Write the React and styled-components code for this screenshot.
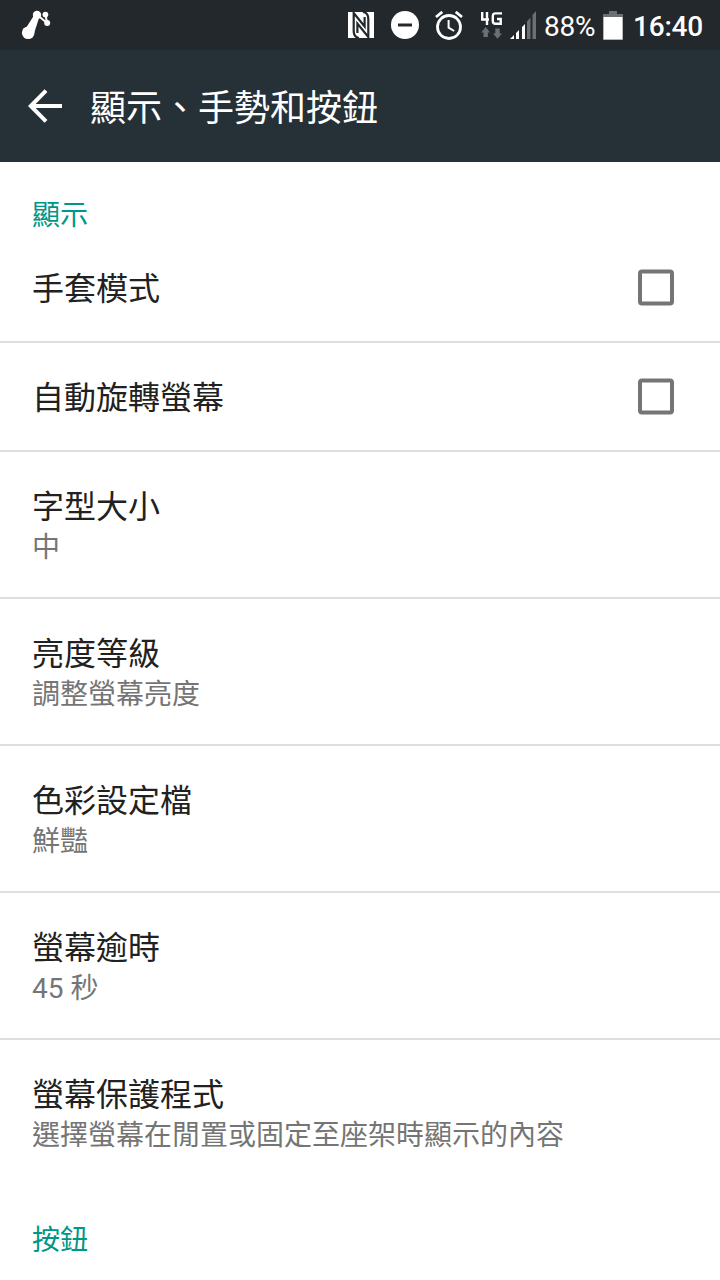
import React from 'react';
import styled, { createGlobalStyle } from 'styled-components';

const GlobalStyle = createGlobalStyle`
  * { box-sizing: border-box; }
  body {
    margin: 0;
    background: #fff;
    font-family: Roboto, "Noto Sans CJK TC", sans-serif;
    overflow: hidden;
  }
  svg { display: block; flex: none; }
`;

const Screen = styled.div`
  width: 720px;
  height: 1280px;
  overflow: hidden;
  background: #fff;
  display: flex;
  flex-direction: column;
`;

const StatusBar = styled.header`
  flex: none;
  height: 50px;
  padding: 0 16px 0 20px;
  display: flex;
  align-items: center;
  justify-content: space-between;
  background: #22282b;
  color: #fff;
`;

const StatusIcons = styled.div`
  display: flex;
  align-items: center;
`;

const Slot = styled.span`
  flex: none;
  display: flex;
  width: ${(p) => p.$width}px;
  margin-right: ${(p) => p.$gap || 0}px;
`;

const StatusText = styled.span`
  flex: none;
  width: ${(p) => p.$width}px;
  margin-right: ${(p) => p.$gap || 0}px;
  padding-top: 3px;
  font-size: 28px;
  line-height: 34px;
  letter-spacing: -0.2px;
  font-weight: ${(p) => p.$weight || 400};
  white-space: nowrap;
`;

const AppBar = styled.div`
  flex: none;
  height: 112px;
  padding-left: 28px;
  display: flex;
  align-items: center;
  background: #263137;
  color: #fff;
`;

const Title = styled.h1`
  margin: 0 0 0 28px;
  padding-top: 6px;
  font-size: 36px;
  line-height: 48px;
  font-weight: 400;
`;

const SectionTitle = styled.h2`
  flex: none;
  margin: 0;
  height: 72px;
  padding: 35px 32px 0;
  font-size: 28px;
  line-height: 38px;
  font-weight: 400;
  color: #009688;
`;

const Row = styled.div`
  flex: none;
  height: ${(p) => (p.$tall ? 147 : 109)}px;
  padding: 0 46px 0 32px;
  display: flex;
  align-items: center;
  justify-content: space-between;
  border-bottom: 2px solid ${(p) => (p.$last ? 'transparent' : '#dedede')};
`;

const Labels = styled.div`
  display: flex;
  flex-direction: column;
`;

const Label = styled.span`
  padding-top: 4px;
  font-size: 32px;
  line-height: 43px;
  color: #212121;
`;

const Summary = styled.span`
  font-size: 28px;
  line-height: 38px;
  color: #757575;
`;

const NodesIcon = () => (
  <svg width="32" height="32" viewBox="20 9 32 32" fill="#fff">
    <path d="M26 28 34.5 14.5 39.5 16.5 33.5 35Z" />
    <path d="M38 15.5 47 23M45.5 14.5 47 23" stroke="#fff" strokeWidth="2" />
    <circle cx="28.2" cy="32.8" r="6.3" />
    <circle cx="37" cy="15" r="4.2" />
    <circle cx="45.4" cy="14.6" r="2.9" />
    <circle cx="47.2" cy="23" r="3" />
  </svg>
);

const NfcIcon = () => (
  <svg width="26" height="26" viewBox="0 0 26 26">
    <path fill="#fff" d="M0 0H26V26H0Z" />
    <path
      fill="none"
      stroke="#22282b"
      strokeWidth="2.2"
      d="M11 26C7.500 25.500 5.700 23 5.700 19V1L16.600 14.500V5M15 0C18.500 .5 20.300 3 20.300 7V25L9.400 11.500V21"
    />
  </svg>
);

const DoNotDisturbIcon = () => (
  <svg width="28" height="28" viewBox="0 0 28 28">
    <circle cx="14" cy="14" r="14" fill="#fff" />
    <path d="M7 12.5H21V15.5H7Z" fill="#22282b" />
  </svg>
);

const AlarmIcon = () => (
  <svg width="28" height="29" viewBox="0 0 28 29" fill="none" stroke="#fff">
    <circle cx="14" cy="16" r="11.5" strokeWidth="2.8" />
    <path d="M1 6 7.3 .9M27 6 20.7 .9" strokeWidth="2.8" />
    <path d="M13.6 9V16.7L19.2 20" strokeWidth="2" />
  </svg>
);

const NetworkIcon = () => (
  <svg width="22" height="28" viewBox="0 -1 22 28" fill="none">
    <path d="M1.2 0V7.500H8M6 0V13" stroke="#fff" strokeWidth="2.4" />
    <path d="M21 1.400H14.500Q11.800 1.400 11.800 4V9Q11.800 11.800 14.500 11.800H19.700V7H16" stroke="#fff" strokeWidth="2.4" />
    <path d="M4.700 15 9 20.500H6.900V25H2.500V20.500H.3Z" fill="#6b7073" />
    <path d="M16.5 26.700 12 21.400H14.300V16.500H18.700V21.400H21Z" fill="#6b7073" />
  </svg>
);

const SignalIcon = () => (
  <svg width="26" height="28" viewBox="0 0 26 28">
    <path fill="#fff" d="M0 28 4 24V28ZM6 22 9 19V28H6ZM12 16 15 13V28H12Z" />
    <path fill="#6b7073" d="M17 10.500 20.500 6.500V28H17ZM22.500 4 26 0V28H22.500Z" />
  </svg>
);

const BatteryIcon = () => (
  <svg width="20" height="30" viewBox="0 0 20 30">
    <path fill="#6b7073" d="M6 1H14V4H20V30H0V4H6Z" />
    <path fill="#fff" d="M.5 7H19.500V29.500H.5Z" />
  </svg>
);

const BackIcon = () => (
  <svg width="34" height="34" viewBox="0 0 34 34" fill="none" stroke="#fff" strokeWidth="4">
    <path d="M34 17H4M18 1.700 2.800 17 18 32.300" />
  </svg>
);

const Checkbox = () => (
  <svg width="36" height="37" viewBox="0 0 36 37" role="checkbox" aria-checked="false">
    <rect x="2" y="2.500" width="32" height="32" rx="2" fill="none" stroke="#757575" strokeWidth="4" />
  </svg>
);

const toggles = ['手套模式', '自動旋轉螢幕'];

const settings = [
  { label: '字型大小', summary: '中' },
  { label: '亮度等級', summary: '調整螢幕亮度' },
  { label: '色彩設定檔', summary: '鮮豔' },
  { label: '螢幕逾時', summary: '45 秒' },
  { label: '螢幕保護程式', summary: '選擇螢幕在閒置或固定至座架時顯示的內容' },
];

export default function App() {
  return (
    <Screen lang="zh-Hant-TW">
      <GlobalStyle />
      <StatusBar>
        <NodesIcon />
        <StatusIcons>
          <Slot $width={26} $gap={17}><NfcIcon /></Slot>
          <Slot $width={28} $gap={16}><DoNotDisturbIcon /></Slot>
          <Slot $width={28} $gap={18}><AlarmIcon /></Slot>
          <Slot $width={22} $gap={7}><NetworkIcon /></Slot>
          <Slot $width={26} $gap={8}><SignalIcon /></Slot>
          <StatusText $width={51} $gap={8}>88%</StatusText>
          <Slot $width={20} $gap={10}><BatteryIcon /></Slot>
          <StatusText $width={71} $weight={500}>16:40</StatusText>
        </StatusIcons>
      </StatusBar>
      <AppBar>
        <BackIcon />
        <Title>顯示、手勢和按鈕</Title>
      </AppBar>
      <SectionTitle>顯示</SectionTitle>
      {toggles.map((label) => (
        <Row key={label}>
          <Label>{label}</Label>
          <Checkbox />
        </Row>
      ))}
      {settings.map(({ label, summary }, i) => (
        <Row key={label} $tall $last={i === settings.length - 1}>
          <Labels>
            <Label>{label}</Label>
            <Summary>{summary}</Summary>
          </Labels>
        </Row>
      ))}
      <SectionTitle>按鈕</SectionTitle>
    </Screen>
  );
}
